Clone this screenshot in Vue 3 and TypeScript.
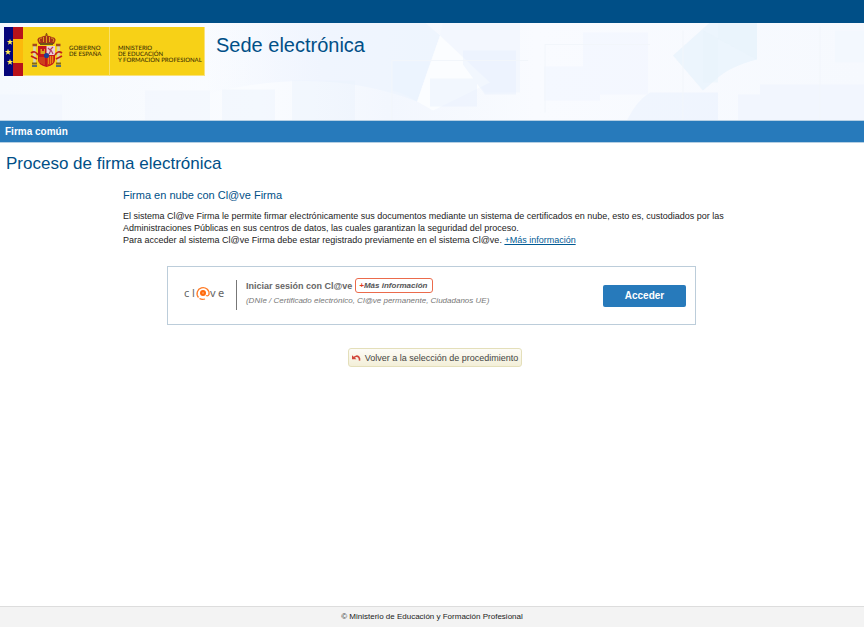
<script setup lang="ts">
const moreInfo = '+Más información'
const starRows: { x: number; y: number }[] = [
  { x: 6, y: 15 },
  { x: 4, y: 25 },
  { x: 6, y: 35 },
]
const star = 'M0 -3.2 L0.8 -1 L3.1 -1 L1.3 0.5 L2 2.8 L0 1.4 L-2 2.8 L-1.3 0.5 L-3.1 -1 L-0.8 -1 Z'
</script>

<template>
  <div class="page">
    <div class="topbar"></div>
    <header class="banner">
      <svg class="banner-art" viewBox="0 0 864 98" preserveAspectRatio="xMidYMid slice" aria-hidden="true">
        <defs>
          <linearGradient id="wash" x1="0" x2="1" y1="0" y2="0">
            <stop offset="0" stop-color="#f5f9fe" />
            <stop offset="0.3" stop-color="#fafcff" />
            <stop offset="0.45" stop-color="#f3f7fe" />
            <stop offset="0.62" stop-color="#f9fbff" />
            <stop offset="1" stop-color="#f6f9fe" />
          </linearGradient>
          <linearGradient id="swoop" x1="0" x2="1" y1="0" y2="0">
            <stop offset="0" stop-color="#f0f5fe" stop-opacity="0" />
            <stop offset="0.5" stop-color="#f0f5fe" />
            <stop offset="1" stop-color="#eef5fe" />
          </linearGradient>
        </defs>
        <rect width="864" height="98" fill="url(#wash)" />
        <path d="M205 72 Q320 42 417 79 L440 13 L425 0 H205Z" fill="url(#swoop)" />
        <path d="M443 0 H520 V70 H485 L440 13Z" fill="#f3f7fe" />
        <path d="M440 13 L417 79 L433 88 L490 60 Z" fill="#fbfdff" />
        <g opacity="0.4">
          <path d="M0 72 H62 V98 H0Z M145 68 H210 V98 H145Z" fill="#eff5fe" />
          <path d="M222 67 H275 V98 H222Z M292 58 H355 V98 H292Z" fill="#ebf3fd" />
          <path d="M392 39 H430 L417 79 Q405 71 392 68Z" fill="#eaf4fe" />
          <path d="M463 28 H516 V72 H485 L463 42Z M430 56 H477 V84 H430Z" fill="#e5effe" />
          <path d="M583 10 H648 V72 H583Z M544 44 H600 V78 H544Z" fill="#eff4ff" />
          <path d="M627 98 Q636 79 650 70 H718 V98Z" fill="#e5effe" />
        </g>
        <path d="M710 0 H757 V37 Q730 44 717 56 L703 68 L673 33Z" fill="#ecf5fd" />
        <path d="M703 8 V60 H718 V0 H757 V37" fill="#e8f3fc" opacity="0.5" />
        <path d="M760 62 H864 V98 H738 V72 H760Z" fill="#f2f6fe" />
        <path d="M835 8 H864 V40 H835Z" fill="#f3f8fe" />
        <path d="M392 98 V38 H528 M545 90 V22 H650 M683 98 V8 M820 4 V98" fill="none" stroke="#f2f6fb" />
      </svg>
      <svg class="gov-logo" viewBox="0 0 201 49" role="img" aria-label="Gobierno de España, Ministerio de Educación y Formación Profesional">
        <rect width="201" height="49" fill="#f9e27c" />
        <rect width="200" height="48" fill="#f7d117" />
        <rect width="10" height="49" fill="#05057a" />
        <rect x="9" width="10" height="49" fill="#fcba0b" />
        <rect x="9" width="10" height="12" fill="#b8121b" />
        <rect x="9" y="36" width="10" height="13" fill="#b8121b" />
        <path v-for="(s, i) in starRows" :key="i" :d="star" :transform="`translate(${s.x} ${s.y})`" fill="#ffec56" />
        <path d="M105.500 0V49" stroke="#f9e06b" />
        <g>
          <path d="M42.500 6V10M41 8H44" stroke="#8b5b10" stroke-width="1.200" />
          <path d="M35 17 Q31 11 37 10 Q42.500 7 48 10 Q54 11 50 17Z" fill="#a63218" />
          <path d="M36 15Q34 11 38 11M42.500 16V9M49 15Q51 11 47 11M39.500 15V10M45.500 15V10" stroke="#e2a91c" stroke-width="0.900" fill="none" />
          <path d="M36 17H49" stroke="#6f5418" stroke-width="2" />
          <path d="M34 19H51V33Q51 38 42.500 40Q34 38 34 33Z" fill="#c3161c" />
          <path d="M42.500 19H51V28H42.500Z" fill="#ead1d5" />
          <path d="M44 21L46 23L49 20M45 27L47 23L49 27" stroke="#b43d6b" stroke-width="1.200" fill="none" />
          <path d="M36.500 27V22H38V24H40V22H41V27Z" fill="#dba31c" />
          <path d="M43 29H50V33Q50 37 43 39Z" fill="#d33a15" />
          <path d="M44.500 29V37M46.500 29V37M48.500 29V36" stroke="#f3be18" stroke-width="0.600" />
          <path d="M36 30V36M38 30V37M40 30V38" stroke="#e8a31c" stroke-width="0.600" />
          <circle cx="42.500" cy="28.500" r="2.600" fill="#213f94" />
          <path d="M30.500 19V37M54.500 19V37" stroke="#d8d1b2" stroke-width="2.600" />
          <path d="M28.500 18H33M52 18H56.500" stroke="#a5481c" stroke-width="2.400" />
          <path d="M27 26Q31 23 34 28M58 26Q54 23 51 28M27 29L33 32M58 29L52 32" stroke="#c2211b" stroke-width="1.800" fill="none" />
          <path d="M28 36.500H33M52 36.500H57" stroke="#856815" stroke-width="2" />
          <path d="M28 39H33M52 39H57" stroke="#284f93" stroke-width="1.600" />
        </g>
        <g class="logo-text">
          <text x="65" y="23">GOBIERNO</text>
          <text x="65" y="29">DE ESPAÑA</text>
          <text x="114" y="23">MINISTERIO</text>
          <text x="114" y="29">DE EDUCACIÓN</text>
          <text x="114" y="35">Y FORMACIÓN PROFESIONAL</text>
        </g>
      </svg>
      <p class="site-name">Sede electrónica</p>
    </header>
    <div class="app-bar">Firma común</div>

    <main class="main">
      <h1>Proceso de firma electrónica</h1>
      <section class="content">
        <h2>Firma en nube con Cl@ve Firma</h2>
        <p class="intro">
          El sistema Cl@ve Firma le permite firmar electrónicamente sus documentos mediante un sistema de certificados en nube, esto es, custodiados por las Administraciones Públicas en sus centros de datos, las cuales garantizan la seguridad del proceso.<br />
          Para acceder al sistema Cl@ve Firma debe estar registrado previamente en el sistema Cl@ve. <a href="#">{{ moreInfo }}</a>
        </p>
        <div class="card">
          <svg class="clave" viewBox="0 0 42 16" role="img" aria-label="Cl@ve">
            <text x="0" y="12">c</text>
            <text x="8" y="12">l</text>
            <text x="26" y="12">v</text>
            <text x="34" y="12">e</text>
            <circle cx="19" cy="8" r="3" fill="#ff6a0c" />
            <circle cx="19" cy="8" r="0.800" fill="#ffc39a" />
            <path d="M14.500 12.500A6 6 0 1 1 25 9.500Q24 11.500 22 10.500M21 14Q18 15 15.500 13.500" fill="none" stroke="#ff7a24" stroke-width="1.300" />
          </svg>
          <div class="login">
            <div class="login-title">
              <strong>Iniciar sesión con Cl@ve</strong>
              <a href="#" class="pill"><span>+</span>Más información</a>
            </div>
            <p>(DNIe / Certificado electrónico, Cl@ve permanente, Ciudadanos UE)</p>
          </div>
          <button type="button" class="access">Acceder</button>
        </div>
        <button type="button" class="back">
          <svg viewBox="0 0 10 8" aria-hidden="true">
            <path d="M0 1V5.500H5Z" fill="#d2473c" />
            <path d="M1.500 4Q5 0.500 7.500 3Q8.800 4.500 8.300 7" fill="none" stroke="#d2473c" stroke-width="1.800" />
          </svg>
          Volver a la selección de procedimiento
        </button>
      </section>
    </main>
    <footer class="footer">© Ministerio de Educación y Formación Profesional</footer>
  </div>
</template>

<style>
body {
  margin: 0;
}
</style>

<style scoped>
.page {
  display: flex;
  flex-direction: column;
  min-height: 100vh;
  background: #fff;
  color: #222;
  font-family: "Liberation Sans", Arial, sans-serif;
  font-size: 9px;
}
.topbar {
  height: 23px;
  background: #004f87;
}
.banner {
  position: relative;
  display: flex;
  align-items: flex-start;
  gap: 11px;
  min-height: 97px;
  box-sizing: border-box;
  padding: 4px;
  overflow: hidden;
}
.banner-art {
  position: absolute;
  inset: 0;
  width: 100%;
  height: 100%;
}
.gov-logo {
  position: relative;
  flex: none;
  width: 201px;
  height: 49px;
}
.logo-text {
  font-family: Lato, sans-serif;
  font-size: 6px;
  font-weight: 500;
  fill: #3c3005;
  text-rendering: geometricPrecision;
}
.site-name {
  position: relative;
  margin: 6px 0 0;
  color: #004f87;
  font-size: 20px;
  line-height: 24px;
}
.app-bar {
  padding-left: 5px;
  border-top: 1px solid #b5cfe3;
  border-bottom: 1px solid #b5cfe3;
  background: #277abb;
  color: #fff;
  font-size: 10px;
  font-weight: bold;
  line-height: 21px;
}
.main {
  flex: 1;
}
h1 {
  margin: 11px 6px 14px;
  color: #004f87;
  font-size: 17px;
  font-weight: normal;
  line-height: 20px;
}
.content {
  display: flex;
  flex-direction: column;
  margin: 0 14%;
  padding: 0 2px;
}
h2 {
  margin: 0 0 8px;
  color: #004f87;
  font-size: 11px;
  font-weight: normal;
  line-height: 14px;
}
.intro {
  margin: 0;
  line-height: 12px;
}
.intro a {
  color: #005a94;
}
.card {
  display: flex;
  align-items: center;
  box-sizing: border-box;
  width: 529px;
  max-width: 100%;
  min-height: 59px;
  margin: 20px 0 23px 44px;
  padding: 0 9px 0 16px;
  border: 1px solid #bccdda;
}
.clave {
  flex: none;
  width: 42px;
  height: 16px;
  margin-bottom: 6px;
}
.clave text {
  font-family: "Noto Sans", sans-serif;
  font-size: 11px;
  fill: #666;
}
.login {
  flex: 1;
  height: 30px;
  margin-left: 10px;
  padding-left: 9px;
  border-left: 1px solid #777;
  margin-bottom: 2px;
}
.login-title {
  display: flex;
  align-items: center;
  gap: 3px;
  height: 12px;
  color: #666;
}
.pill {
  padding: 0 4px 0 3px;
  border: 1px solid #eb6b4c;
  border-radius: 3px;
  color: #555;
  font-size: 8px;
  font-style: italic;
  font-weight: bold;
  line-height: 13px;
  text-decoration: none;
}
.pill span {
  color: #e33b18;
}
.login p {
  margin: 3px 0 0;
  color: #777;
  font-size: 8px;
  font-style: italic;
  line-height: 12px;
}
.access {
  width: 83px;
  height: 22px;
  padding: 0;
  border: 0;
  border-radius: 2px;
  background: #277abb;
  color: #fff;
  font: bold 10px "Liberation Sans", Arial, sans-serif;
}
.back {
  display: flex;
  align-items: center;
  align-self: center;
  gap: 4px;
  height: 19px;
  margin-left: 6px;
  padding: 0 3px;
  border: 1px solid #e4dfba;
  border-radius: 3px;
  background: linear-gradient(#fdfcf7, #f3efd8);
  color: #444;
  font: 9px "Liberation Sans", Arial, sans-serif;
}
.back svg {
  width: 9px;
  height: 8px;
}
.footer {
  border-top: 1px solid #ddd;
  background: #f3f3f3;
  font-size: 8px;
  line-height: 20px;
  text-align: center;
}
</style>
